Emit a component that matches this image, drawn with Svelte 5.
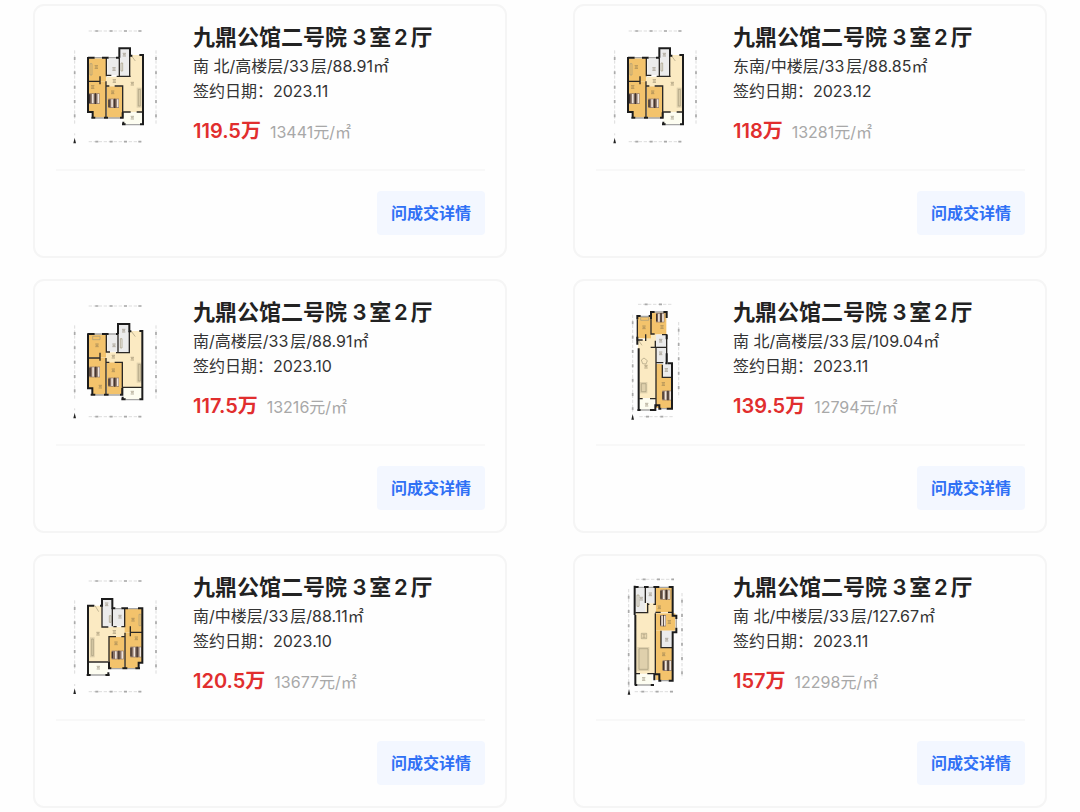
<script lang="ts">
  type Box = [number, number, number, number];

  interface Plan {
    living: string;
    rooms: Box[];
    wet: Box[];
    balcony: Box;
    thick: string;
    thin: string;
    windows: string;
    beds: Box[];
    sofa: Box;
    labels: [number, number][];
    dims: string;
    north: [number, number];
    extra?: string;
  }

  const wideDims = "M86 48H248M44 106V326M288 106V326M86 380H244";

  const standard: Plan = {
    living: "M205 120H250V292H188V214H119V185H208Z",
    rooms: [[84, 130, 54, 68], [84, 199, 54, 92], [98, 285, 40, 23], [140, 214, 48, 94]],
    wet: [[142, 130, 37, 50], [179, 102, 30, 82]],
    balcony: [190, 293, 58, 36],
    thick: "M84 128H104M84 126V291H98V308M94 308H106M132 308H144M126 128H146M178 128V100H210V122H217M178 128H168M238 120H249V328M240 328H252M186 328H197M190 320V328M180 308H188V292",
    thin: "M139 128V184M141 181H154M170 184H212M178 128V182M120 184V208M138 199V307M140 213H148M164 213H188V308M190 291H212M84 199H120M230 291H249M209 120V184",
    windows: "M104 128H126M146 128H168M106 309H132M144 309H180M197 329H240",
    beds: [[87, 235, 32, 32], [145, 251, 32, 28]],
    sofa: [230, 218, 15, 60],
    labels: [[109, 156], [162, 162], [193, 119], [217, 206], [98, 216], [158, 232], [217, 308], [163, 198]],
    dims: wideDims,
    north: [44, 376],
    extra: "M90 146V180H96V146ZM183 144V168H188V144ZM214 122L226 138",
  };

  const tall: Plan = {
    ...standard,
    living: "M205 123H248V292H188V217H119V187H208Z",
    rooms: [[84, 133, 54, 69], [84, 203, 54, 92], [98, 288, 40, 26], [140, 217, 48, 96]],
    wet: [[142, 133, 34, 52], [175, 104, 34, 82]],
    thick: "M84 132H104M84 130V295H97V314M92 314H106M132 314H146M126 132H146M174 132V102H208V124H214M174 132H168M238 123H247V328M238 328H250M184 328H197M188 320V328M180 314H187V294",
    thin: "M139 132V188M141 186H150M168 188H210M174 132V186M120 188V212M138 204V312M140 217H148M164 217H187V314M189 292H249M84 204H118M208 123V188",
    windows: "M104 132H126M146 132H168M106 315H132M146 315H180M197 329H238",
    beds: [[88, 230, 32, 32], [145, 263, 32, 27]],
    labels: [[111, 166], [162, 166], [191, 122], [217, 206], [121, 290], [160, 241], [217, 308], [160, 200]],
    extra: "M98 139H120V149H98ZM181 146V174H186V146ZM214 124L226 140",
  };

  const mirrored: Plan = {
    living: "M84 122H127V186H212V214H147V290H84Z",
    rooms: [[194, 132, 53, 70], [194, 203, 53, 90], [194, 285, 42, 26], [147, 215, 46, 96]],
    wet: [[126, 103, 31, 82], [158, 132, 35, 52]],
    balcony: [86, 292, 58, 38],
    thick: "M103 122H84V330M80 330H92M136 330H149M145 322V330M120 122H126V102H157V130H166M184 130H204M234 130H247V293H236V310M240 310H226M202 310H187M154 310H147V290",
    thin: "M157 130V184M126 122V186H145M160 185H170M184 185H194V130M211 184V214M212 202H247M195 203V310M147 310V215H168M184 215H194M86 291H144",
    windows: "M166 131H184M204 131H234M154 311H187M202 311H226M92 330H136",
    beds: [[211, 245, 34, 32], [155, 257, 36, 26]],
    sofa: [90, 217, 14, 60],
    labels: [[219, 164], [180, 155], [140, 118], [114, 206], [229, 220], [168, 235], [115, 308], [163, 201]],
    dims: wideDims,
    north: [44, 378],
    extra: "M237 148V182H243V148ZM148 152V172H153V152ZM105 122L116 140",
  };

  const narrow: Plan = {
    living: "M114 150H169V325H116ZM137 133H169V170H137Z",
    rooms: [[113, 80, 40, 65], [153, 67, 46, 66], [168, 222, 49, 132]],
    wet: [[168, 135, 31, 36], [169, 171, 31, 45], [187, 222, 29, 40]],
    balcony: [116, 327, 48, 34],
    thick: "M112 88V78H122M146 78H153V66H164M190 66H200V84M112 140V164M116 175V360M112 360H122M150 360H166V346H178V356H184M200 356H216V220H204M200 190V220H196M200 134V148M153 66V88",
    thin: "M112 88V150H128M153 88V132H164M186 134H200V222M137 133V153M168 172H200M166 152V172M152 172H168V352M187 224V262H216M118 326H128M150 326H168M168 218H190",
    windows: "M122 79H146M164 66H190M122 360H150M184 356H200",
    beds: [[168, 69, 25, 28], [187, 302, 28, 29]],
    sofa: [119, 276, 23, 34],
    labels: [[132, 112], [182, 152], [182, 190], [186, 111], [138, 230], [199, 240], [190, 282], [140, 344]],
    dims: "M114 43H218M98 74V360M236 96V322M118 380H220",
    north: [98, 380],
    extra: "M122 82H146V91H122ZM124 210L132 204L142 212L138 222L128 221ZM116 152L126 166",
  };

  const deep: Plan = {
    living: "M108 143H137V115H166V326H108Z",
    rooms: [[167, 67, 50, 75], [166, 145, 60, 52], [167, 197, 49, 148]],
    wet: [[106, 67, 30, 76], [138, 67, 27, 47], [183, 197, 33, 50]],
    balcony: [108, 328, 48, 32],
    thick: "M104 62V150M104 66H116M132 66H146M160 66H178M206 66H218V152H229V162M229 188V202H218V347H206M184 347H178V328H163V346M106 150V360M104 360H112M152 360H162",
    thin: "M136 66V114M143 114V143H106M143 118H148M160 118H166V66M166 142H182M204 142H218M166 145V328M183 197V248H216M106 326H120M142 326H163",
    windows: "M116 67H132M146 67H160M178 67H206M184 347H206M112 360H152M229 162V188",
    beds: [[181, 74, 30, 30], [180, 150, 18, 34], [188, 286, 27, 32]],
    sofa: [112, 246, 36, 72],
    labels: [[124, 101], [151, 88], [178, 127], [208, 171], [132, 213], [200, 224], [191, 268], [131, 342]],
    dims: "M108 43H222M86 72V370M246 84V340M104 380H222",
    north: [87, 380],
    extra: "M111 90V124H117V90ZM124 205H140V221H124ZM124 268H138V296H124Z",
  };

  const title = "九鼎公馆二号院 3室2厅";

  const deals = [
    { detail: "南 北/高楼层/33层/88.91㎡", date: "2023.11", total: "119.5", unit: "13441", plan: standard },
    { detail: "东南/中楼层/33层/88.85㎡", date: "2023.12", total: "118", unit: "13281", plan: standard },
    { detail: "南/高楼层/33层/88.91㎡", date: "2023.10", total: "117.5", unit: "13216", plan: tall },
    { detail: "南 北/高楼层/33层/109.04㎡", date: "2023.11", total: "139.5", unit: "12794", plan: narrow },
    { detail: "南/中楼层/33层/88.11㎡", date: "2023.10", total: "120.5", unit: "13677", plan: mirrored },
    { detail: "南 北/中楼层/33层/127.67㎡", date: "2023.11", total: "157", unit: "12298", plan: deep },
  ];
</script>

{#snippet floorPlan(p: Plan)}
  <svg class="plan" viewBox="0 0 330 420" role="img" aria-label="户型图">
    <path class="living" d={p.living} />
    {#each p.rooms as [x, y, width, height]}
      <rect class="room" {x} {y} {width} {height} />
    {/each}
    {#each p.wet as [x, y, width, height]}
      <rect class="wet" {x} {y} {width} {height} />
    {/each}
    <rect class="balcony" x={p.balcony[0]} y={p.balcony[1]} width={p.balcony[2]} height={p.balcony[3]} />
    {#if p.extra}
      <path class="fitting" d={p.extra} />
    {/if}
    {#each p.beds as [x, y, w, h]}
      <rect class="bed" {x} {y} width={w} height={h} />
      <path class="pillow" d={`M${x + 2} ${y + 3}v${h - 6}M${x + w * 0.6} ${y}v${h}`} />
      <path class="sheet" d={`M${x + w * 0.35} ${y + 2}v${h - 4}M${x + w - 4} ${y + 2}v${h - 4}`} />
    {/each}
    <rect class="sofa" x={p.sofa[0]} y={p.sofa[1]} width={p.sofa[2]} height={p.sofa[3]} />
    <path class="fitting" d={`M${p.sofa[0] + 5} ${p.sofa[1] + 5}v${p.sofa[3] - 10}h${p.sofa[2] - 9}v${10 - p.sofa[3]}z`} />
    <path class="window" d={p.windows} />
    <path class="thin" d={p.thin} />
    <path class="thick" d={p.thick} />
    {#each p.labels as [x, y]}
      <path class="mark" d={`M${x - 5} ${y - 4}h10M${x - 4} ${y}h8M${x - 5} ${y + 4}h10`} />
    {/each}
    <path class="dims" d={p.dims} />
    <path class="dims-text" d={p.dims} />
    <path class="north" d={`M${p.north[0]} ${p.north[1] - 8}l4 17h-8z`} />
    <path class="dims" d={`M${p.north[0]} ${p.north[1] - 21}v6`} />
  </svg>
{/snippet}

<main>
  {#each deals as deal}
    <article>
      <div class="info">
        {@render floorPlan(deal.plan)}
        <div class="text">
          <h2>{title}</h2>
          <p>{deal.detail}</p>
          <p>签约日期：{deal.date}</p>
          <div class="price">
            <strong>{deal.total}万</strong>
            <span>{deal.unit}元/㎡</span>
          </div>
        </div>
      </div>
      <footer>
        <button type="button">问成交详情</button>
      </footer>
    </article>
  {/each}
</main>

<style>
  :global(body) {
    margin: 0;
    background: #fefefe;
  }
  main {
    display: grid;
    grid-template-columns: 1fr 1fr;
    gap: 21px 66px;
    padding: 4px 33px 0;
    font-family: Inter, "Noto Sans CJK SC", sans-serif;
    text-autospace: normal;
    color: #222;
  }
  article {
    box-sizing: border-box;
    min-width: 0;
    padding: 9px 20px 21px 21px;
    border: 2px solid #f5f5f5;
    border-radius: 11px;
  }
  .info {
    display: flex;
    gap: 23px;
    padding: 0 0 14px 4px;
  }
  .plan {
    flex: none;
    width: 110px;
    height: 140px;
  }
  .text {
    min-width: 0;
    padding-top: 6px;
    white-space: nowrap;
  }
  h2 {
    margin: 0;
    font-size: 22px;
    font-weight: 600;
    line-height: 32px;
  }
  p {
    margin: 0;
    font-size: 16px;
    line-height: 25px;
    color: #333;
  }
  h2 + p {
    margin-top: 1px;
  }
  .price {
    display: flex;
    align-items: baseline;
    gap: 9px;
    margin-top: 12px;
    line-height: 30px;
    text-autospace: no-autospace;
  }
  .price strong {
    font-size: 20px;
    font-weight: 600;
    color: #e12e2e;
  }
  .price span {
    font-size: 16px;
    color: #a8a8a8;
  }
  footer {
    display: flex;
    justify-content: flex-end;
    padding-top: 20px;
    border-top: 2px solid #f8f8f8;
  }
  button {
    padding: 0 14px;
    border: 0;
    border-radius: 4px;
    background: #f3f7ff;
    font: 600 16px/44px Inter, "Noto Sans CJK SC", sans-serif;
    color: #2f70f5;
    cursor: pointer;
  }

  .plan path {
    fill: none;
  }
  .plan path.living {
    fill: #fbeac2;
  }
  .plan path.north {
    fill: #222;
  }
  .room {
    fill: #f3c36c;
  }
  .wet {
    fill: #ececec;
  }
  .balcony {
    fill: #fdfdf1;
  }
  .bed {
    fill: #8a7468;
  }
  .sofa {
    fill: #dfd0ac;
  }
  .pillow {
    stroke: #40332e;
    stroke-width: 4;
  }
  .sheet {
    stroke: #f0e6dd;
    stroke-width: 5;
  }
  .fitting {
    stroke: #a59a7c;
    stroke-width: 2;
  }
  .window {
    stroke: #a5a5a5;
    stroke-width: 4;
  }
  .thin {
    stroke: #2b2825;
    stroke-width: 4;
  }
  .thick {
    stroke: #1c1c1c;
    stroke-width: 6;
  }
  .mark {
    stroke: #6d6048;
    stroke-width: 2;
    opacity: 0.7;
  }
  .dims {
    stroke: #ccc;
    stroke-width: 2;
    stroke-dasharray: 10 5;
  }
  .dims-text {
    stroke: #aaa;
    stroke-width: 5;
    stroke-dasharray: 0 20 9 14;
  }
</style>
